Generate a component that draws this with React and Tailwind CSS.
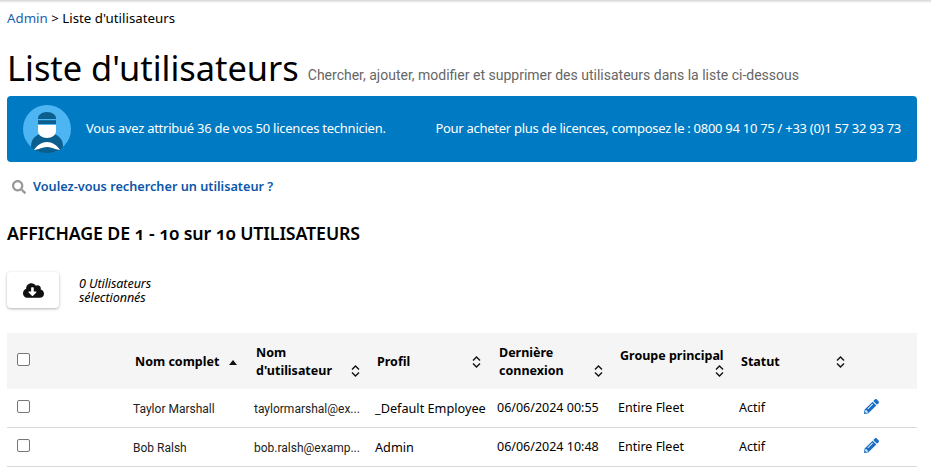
import React from 'react';
import { FaPencilAlt, FaCloudDownloadAlt, FaSearch } from 'react-icons/fa';

const users = [
  { name: 'Taylor Marshall', login: 'taylormarshal@ex...', profile: '_Default Employee', last: '06/06/2024 00:55' },
  { name: 'Bob Ralsh', login: 'bob.ralsh@examp...', profile: 'Admin', last: '06/06/2024 10:48' }
];

const SortIcon = ({ className = '' }) => (
  <svg className={`w-[9px] h-[12px] shrink-0 ${className}`} viewBox="0 0 9 12" fill="none" stroke="#111" strokeWidth="1.4">
    <path d="M1 4.5 4.5 1 8 4.5M1 7.5 4.5 11 8 7.5" />
  </svg>
);

const Checkbox = () => (
  <span className="block w-[13px] h-[13px] border border-[#767676] rounded-[2px] bg-white" />
);

// technician avatar in the banner
const TechAvatar = () => (
  <svg className="w-12 h-12 shrink-0" viewBox="0 0 48 48">
    <circle cx="24" cy="24" r="24" fill="#4db5f2" />
    <path d="M8 42c0-7 3-11 9-13 3 2 11 2 14 0 6 2 9 6 9 13-4 4-10 6-16 6s-12-2-16-6z" fill="#0b5f8f" />
    <path d="M15 20h18v6c0 4-4 7-9 7s-9-3-9-7z" fill="#fff" />
    <path d="M15 19v-6c0-3 4-6 9-6s9 3 9 6v6z" fill="#0b5f8f" />
    <rect x="15" y="14" width="18" height="1.2" fill="#4db5f2" />
    <path d="M11 45c3-5 8-8 13-8s10 3 13 8l-5-1c-2-1-5-2-8-2s-6 1-8 2z" fill="#fff" />
  </svg>
);

export default function App() {
  return (
    <div className="h-[471px] overflow-hidden bg-white font-['Noto_Sans',sans-serif] text-black">
      <div className="h-[3px] bg-gradient-to-b from-[#d4d4d4] to-white" />

      <div className="px-[7px]">
        {/* Breadcrumb */}
        <div className="mt-[6px] h-[18px] text-[13.3px] leading-[18px]">
          <span className="text-[#1b5fb0]">Admin</span> &gt; Liste d'utilisateurs
        </div>

        {/* Title */}
        <div className="mt-[16px] flex items-baseline h-[50px]">
          <h1 className="text-[34.4px] leading-[50px] font-normal">Liste d'utilisateurs</h1>
          <span className="ml-[9px] -translate-y-px font-['Roboto',sans-serif] text-[14px] text-[#666]">
            Chercher, ajouter, modifier et supprimer des utilisateurs dans la liste ci-dessous
          </span>
        </div>

        {/* Licence banner */}
        <div className="mt-[3px] h-[66px] w-[910px] rounded-[4px] bg-[#007ac3] flex items-center text-white text-[13px] pl-[16px]">
          <TechAvatar />
          <span className="ml-[15px] tracking-[-0.25px]">Vous avez attribué 36 de vos 50 licences technicien.</span>
          <span className="ml-auto mr-[16px] tracking-[-0.28px]">Pour acheter plus de licences, composez le : 0800 94 10 75 / +33 (0)1 57 32 93 73</span>
        </div>

        {/* Search link */}
        <div className="mt-[16px] h-[18px] flex items-center pl-[5px]">
          <FaSearch className="w-[14px] h-[14px] text-[#999]" />
          <span className="ml-[7px] text-[12.7px] font-semibold text-[#0b56a8]">Voulez-vous rechercher un utilisateur ?</span>
        </div>

        <h2 className="mt-[25px] h-[24px] text-[17.75px] leading-[24px] font-semibold tracking-[-0.1px] [font-variant-numeric:oldstyle-nums]">AFFICHAGE DE 1 - 10 sur 10 UTILISATEURS</h2>

        {/* Export */}
        <div className="mt-[27px] flex items-center h-[36px]">
          <button className="w-[52px] h-[36px] rounded-[4px] bg-white shadow-[0_1px_3px_rgba(0,0,0,0.3)] flex items-center justify-center">
            <FaCloudDownloadAlt className="w-[21px] h-[17px] text-[#111]" />
          </button>
          <div className="ml-[20px] mt-[1px] text-[12.6px] leading-[14px] italic tracking-[-0.1px]">
            0 Utilisateurs<br />sélectionnés
          </div>
        </div>

        {/* Users table */}
        <table className="mt-[25px] w-[910px] table-fixed border-separate border-spacing-0 text-[12.5px]">
          <colgroup>
            <col className="w-[120px]" />
            <col className="w-[121px]" />
            <col className="w-[121px]" />
            <col className="w-[121px]" />
            <col className="w-[121px]" />
            <col className="w-[121px]" />
            <col className="w-[121px]" />
            <col className="w-[64px]" />
          </colgroup>
          <thead>
            <tr className="h-[56px] bg-[#f5f5f5] text-left leading-[18px]">
              <th className="pl-[10px] pb-[3px] align-middle"><Checkbox /></th>
              <th className="pl-[8px] pt-[2px] font-bold">
                <span className="flex items-center">Nom complet
                  <svg className="ml-[10px] w-[8px] h-[5px]" viewBox="0 0 8 5"><path d="M0 5 4 0l4 5z" fill="#111" /></svg>
                </span>
              </th>
              <th className="pl-[8px] pt-[2px] font-bold">
                <span className="flex items-end">
                  <span>Nom<br />d'utilisateur</span>
                  <SortIcon className="ml-[19px] mb-[3px]" />
                </span>
              </th>
              <th className="pl-[8px] pt-[2px] font-bold">
                <span className="flex items-center justify-between pr-[9px]">Profil <SortIcon /></span>
              </th>
              <th className="pl-[9px] pt-[2px] font-bold">
                <span className="flex items-end">
                  <span>Dernière<br />connexion</span>
                  <SortIcon className="ml-[30px] mb-[3px]" />
                </span>
              </th>
              <th className="pl-[9px] pt-[2px] font-bold">
                <span className="block whitespace-nowrap">Groupe principal</span>
                <span className="flex justify-end pr-[8px]"><SortIcon /></span>
              </th>
              <th className="pl-[9px] pt-[2px] font-bold">
                <span className="flex items-center justify-between pr-[16px] w-[120px]">Statut <SortIcon /></span>
              </th>
              <th />
            </tr>
          </thead>
          <tbody>
            {users.map((u) => (
              <tr key={u.login} className="h-[39px]">
                <td className="pl-[10px] pb-[3px] border-b border-[#d9d9d9]"><Checkbox /></td>
                <td className="pl-[6px] pt-[1px] border-b border-[#d9d9d9] font-['Roboto',sans-serif] text-[12px] text-[#222]">{u.name}</td>
                <td className="pl-[6px] pt-[1px] border-b border-[#d9d9d9] font-['Roboto',sans-serif] text-[12px] text-[#222] whitespace-nowrap">{u.login}</td>
                <td className="pl-[6px] pt-[1px] border-b border-[#d9d9d9] text-[12.7px] whitespace-nowrap">{u.profile}</td>
                <td className="pl-[7px] pt-[1px] border-b border-[#d9d9d9] whitespace-nowrap">{u.last}</td>
                <td className="pl-[7px] pt-[1px] border-b border-[#d9d9d9]">Entire Fleet</td>
                <td className="pl-[7px] pt-[1px] border-b border-[#d9d9d9]">Actif</td>
                <td className="pl-[11px] pb-[4px] border-b border-[#d9d9d9]">
                  <FaPencilAlt className="w-[15px] h-[15px] text-[#1a6fc4]" />
                </td>
              </tr>
            ))}
          </tbody>
        </table>
      </div>
    </div>
  );
}
